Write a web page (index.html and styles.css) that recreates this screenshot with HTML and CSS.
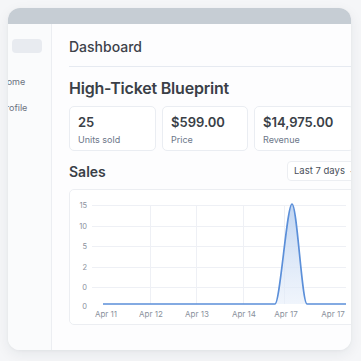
FILE: index.html
```html
<!DOCTYPE html>
<html>
<head>
<meta charset="utf-8">
<link rel="stylesheet" href="styles.css">
</head>
<body>
<div class="window">
  <div class="titlebar"></div>
  <div class="body">
    <aside class="sidebar">
      <div class="pill"></div>
      <nav class="nav">
        <span class="nav-item">Home</span>
        <span class="nav-item">Profile</span>
      </nav>
    </aside>
    <main class="main">
      <header class="header"><h1 class="title">Dashboard</h1></header>
      <h2 class="product">High-Ticket Blueprint</h2>
      <div class="stats">
        <div class="card"><div class="num">25</div><div class="lbl">Units sold</div></div>
        <div class="card"><div class="num">$599.00</div><div class="lbl">Price</div></div>
        <div class="card"><div class="num">$14,975.00</div><div class="lbl">Revenue</div></div>
      </div>
      <div class="sales-row">
        <h3 class="sales">Sales</h3>
        <div class="select">Last 7 days <span class="chev">&#8964;</span></div>
      </div>
      <div class="chart">
        <svg class="chart-svg" width="292" height="134" viewBox="0 0 292 134">
          <defs>
            <linearGradient id="fillg" x1="0" y1="0" x2="0" y2="1">
              <stop offset="0" stop-color="#b9d0f0" stop-opacity="0.9"/>
              <stop offset="1" stop-color="#e6eefa" stop-opacity="0.6"/>
            </linearGradient>
          </defs>
          <g stroke="#eef0f5" stroke-width="1">
            <line x1="22" y1="15.5" x2="276" y2="15.5"/>
            <line x1="22" y1="36.5" x2="276" y2="36.5"/>
            <line x1="22" y1="56.5" x2="276" y2="56.5"/>
            <line x1="22" y1="77.5" x2="276" y2="77.5"/>
            <line x1="22" y1="97.5" x2="276" y2="97.5"/>
            <line x1="80.5" y1="15" x2="80.5" y2="114"/>
            <line x1="126.5" y1="15" x2="126.5" y2="114"/>
            <line x1="173.5" y1="15" x2="173.5" y2="114"/>
            <line x1="214.5" y1="15" x2="214.5" y2="114"/>
          </g>
          <g class="ylab" text-anchor="end">
            <text x="17" y="18">15</text>
            <text x="17" y="38.5">10</text>
            <text x="17" y="59">5</text>
            <text x="17" y="80">2</text>
            <text x="17" y="100">0</text>
            <text x="17" y="119">0</text>
          </g>
          <path d="M33 114 H205 C210 114 217 14 222 14 C227 14 232 114 237 114 Z" fill="url(#fillg)"/>
          <path d="M33 114 H205 C210 114 217 14 222 14 C227 14 232 114 237 114 H276" fill="none" stroke="#5b8fd9" stroke-width="1.7" stroke-linejoin="round"/>
          <g class="xlab" text-anchor="middle">
            <text x="36" y="127">Apr 11</text>
            <text x="81" y="127">Apr 12</text>
            <text x="127" y="127">Apr 13</text>
            <text x="174" y="127">Apr 14</text>
            <text x="216" y="127">Apr 17</text>
            <text x="263" y="127">Apr 17</text>
          </g>
        </svg>
      </div>
    </main>
  </div>
</div>
</body>
</html>
```

FILE: styles.css
```css
* { box-sizing: border-box; }
html, body { margin: 0; padding: 0; }
body {
  background: #f5f6f8;
  width: 361px;
  height: 361px;
  overflow: hidden;
  padding: 8px 0 0 8px;
  font-family: Inter, "Noto Sans", sans-serif;
}
.window {
  width: 343px;
  height: 342px;
  border-radius: 12px;
  overflow: hidden;
  background: #fcfcfd;
  box-shadow: 0 4px 14px rgba(30, 40, 60, 0.07), 0 1px 3px rgba(30, 40, 60, 0.04);
  display: flex;
  flex-direction: column;
}
.titlebar {
  height: 16px;
  background: #c6cdd4;
  flex: none;
}
.body {
  flex: 1;
  display: flex;
  min-height: 0;
}
.sidebar {
  width: 44px;
  flex: none;
  background: #fafbfc;
  border-right: 1px solid #eceef2;
  overflow: hidden;
  padding-top: 15px;
}
.pill {
  margin-left: 4px;
  width: 30px;
  height: 14px;
  border-radius: 4px;
  background: #e8ebf0;
}
.nav {
  display: flex;
  flex-direction: column;
  gap: 14px;
  margin-top: 23px;
  margin-left: -8px;
}
.nav-item {
  font-size: 9px;
  line-height: 12px;
  color: #6b7280;
  white-space: nowrap;
}
.main {
  flex: 1;
  min-width: 0;
  background: #fdfdfe;
  padding-left: 17px;
  overflow: hidden;
}
.header {
  width: 294px;
  padding-top: 14px;
  padding-bottom: 11px;
  border-bottom: 1px solid #e6eaf1;
}
.title {
  margin: 0;
  font-size: 14px;
  line-height: 17px;
  font-weight: 500;
  color: #3d424a;
}
.product {
  margin: 11px 0 0;
  font-size: 16px;
  line-height: 20px;
  font-weight: 600;
  color: #3a3f47;
  letter-spacing: -0.2px;
}
.stats {
  margin-top: 8px;
  display: grid;
  grid-template-columns: 87px 86px 100px;
  gap: 6px;
}
.card {
  height: 45px;
  border: 1px solid #eaedf2;
  border-radius: 5px;
  background: #fff;
  padding: 7px 0 0 8px;
}
.num {
  font-size: 13px;
  line-height: 16px;
  font-weight: 600;
  color: #3a3f47;
}
.lbl {
  margin-top: 4px;
  font-size: 9px;
  line-height: 12px;
  color: #6c7789;
}
.sales-row {
  width: 294px;
  margin-top: 10px;
  display: flex;
  align-items: center;
  justify-content: space-between;
  height: 20px;
}
.sales {
  margin: 0;
  font-size: 14px;
  line-height: 17px;
  font-weight: 600;
  color: #3a3f47;
}
.select {
  height: 20px;
  border: 1px solid #eceef2;
  border-radius: 4px;
  padding: 0 6px;
  font-size: 9.5px;
  line-height: 18px;
  color: #4a505a;
  background: #fff;
  white-space: nowrap;
  width: 76px;
}
.chev {
  font-size: 9px;
  margin-left: 2px;
  color: #6b7280;
}
.chart {
  margin-top: 8px;
  width: 294px;
  height: 136px;
  border: 1px solid #eceef2;
  border-radius: 5px;
  background: #fff;
}
.chart-svg { display: block; }
.ylab text, .xlab text {
  font-family: Inter, "Noto Sans", sans-serif;
  font-size: 7.5px;
  fill: #8a919c;
}
.xlab text { font-size: 8px; }
```
